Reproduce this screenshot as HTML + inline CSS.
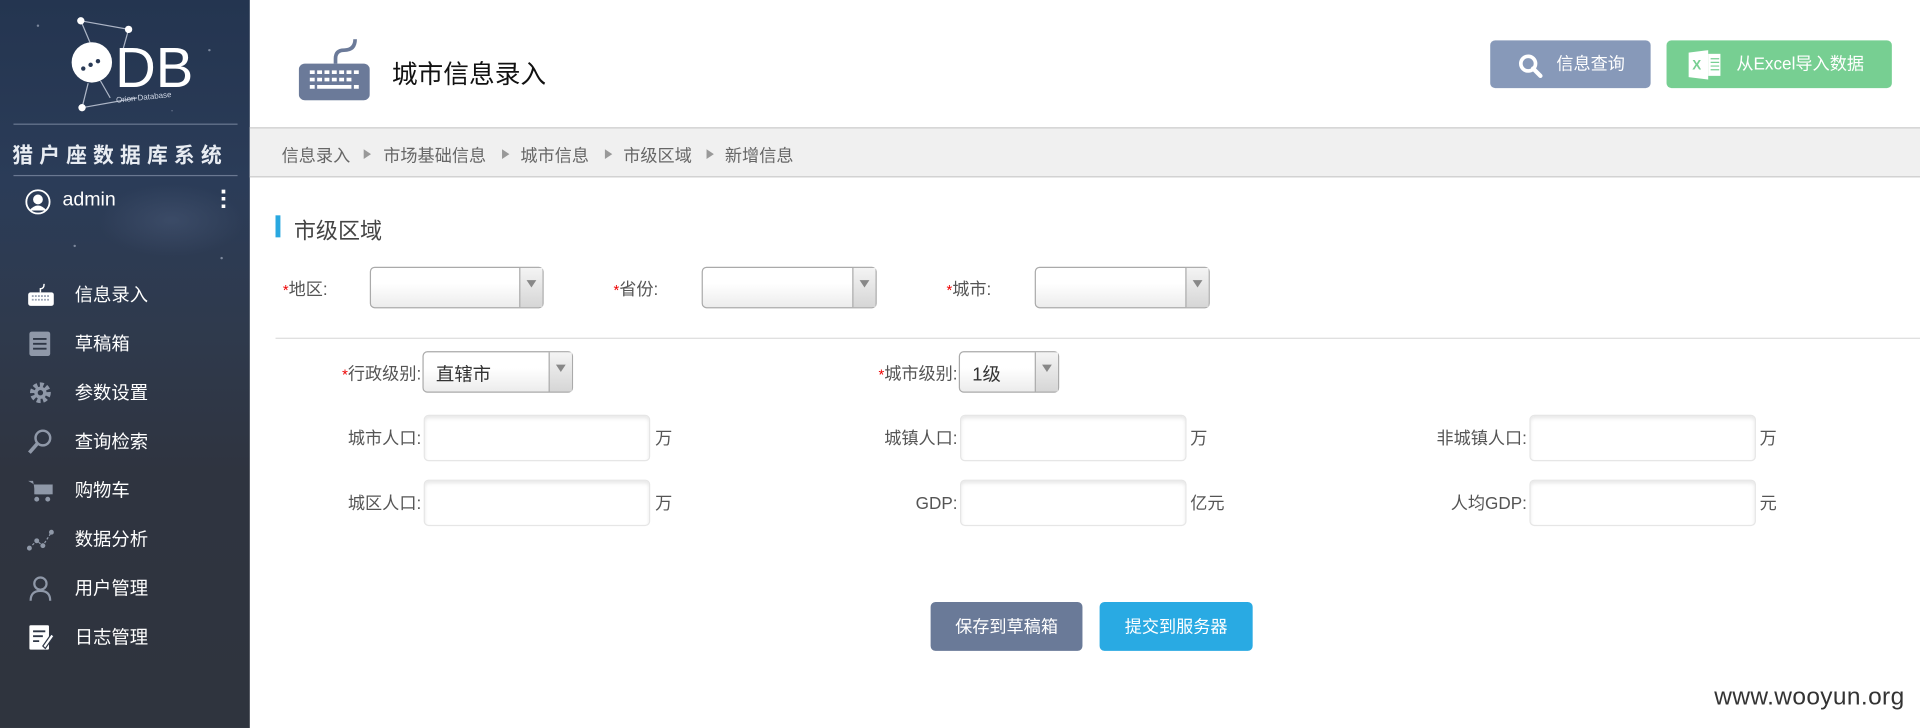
<!DOCTYPE html>
<html><head><meta charset="utf-8">
<style>
html,body{margin:0;padding:0;width:1920px;height:728px;overflow:hidden;background:#fff;}
#w{position:absolute;left:0;top:0;width:1568px;height:595px;transform:scale(1.2245,1.2235);transform-origin:0 0;font-family:"Liberation Sans","Noto Sans CJK SC",sans-serif;}
.a{position:absolute;}
#side{left:0;top:0;width:204px;height:595px;background:linear-gradient(180deg,#243550 0%,#2b3c58 25%,#2f3a4d 45%,#2f3440 65%,#2f343e 100%);overflow:hidden;}
.star{position:absolute;background:#cfd8e8;border-radius:50%;opacity:.5}
.mi{position:absolute;left:61px;color:#fff;font-size:15px;line-height:20px;}
.ic{position:absolute;left:22px;width:22px;height:22px;}
.lbl{position:absolute;font-size:14px;color:#555;line-height:18px;white-space:nowrap}
.lbl b{color:#e00;font-weight:normal;font-size:12px;}
.sel{position:absolute;height:34px;border:1px solid #aaa;border-radius:4px;background:linear-gradient(#fff 40%,#ececec);box-sizing:border-box;font-size:15px;color:#333;}
.sel i{position:absolute;right:0;top:0;bottom:0;width:18px;border-left:1px solid #aaa;background:linear-gradient(#f4f4f4,#d6d6d6);}
.sel i:after{content:"";position:absolute;left:5px;top:10px;border:4px solid transparent;border-top:6px solid #888;}
.sel span{position:absolute;left:10px;top:7px;}
.inp{position:absolute;height:38px;border:1px solid #e6e6e6;border-radius:4px;box-shadow:inset 0 2px 3px #e8e8e8;box-sizing:border-box;background:#fff;}
.unit{position:absolute;font-size:14px;color:#555;}
.btn{position:absolute;border-radius:4px;color:#fff;font-size:14px;text-align:center;}
.bc{position:absolute;top:117px;font-size:14px;color:#666;}
.tri{position:absolute;top:122px;border:4px solid transparent;border-left:6px solid #999;}
</style></head><body><div id="w">
<div id="side" class="a">
  <div class="star" style="left:30px;top:20px;width:2px;height:2px"></div>
  <div class="star" style="left:170px;top:40px;width:2px;height:2px"></div>
  <div class="star" style="left:140px;top:90px;width:1px;height:1px"></div>
  <div class="star" style="left:60px;top:200px;width:2px;height:2px"></div>
  <div class="star" style="left:180px;top:210px;width:2px;height:2px"></div>
  <div style="position:absolute;left:80px;top:150px;width:120px;height:60px;background:radial-gradient(#4a5a78,transparent 70%);opacity:.5"></div>
  <svg class="a" style="left:0;top:0" width="204" height="100" viewBox="0 0 204 100">
    <g stroke="#cfd6e4" stroke-width="1" fill="none" opacity=".8"><path d="M66 17 L105 24 M66 17 L77 43 M105 24 L100 42 M72 68 L67 88 M67 88 L112 80 M82 66 L90 80"/></g>
    <circle cx="66" cy="17" r="3" fill="#fff"/><circle cx="105" cy="24" r="3" fill="#fff"/><circle cx="67" cy="88" r="3" fill="#fff"/>
    <circle cx="75" cy="51" r="16.5" fill="#fff"/>
    <circle cx="68" cy="56" r="1.8" fill="#2a3a56"/><circle cx="74" cy="53" r="1.8" fill="#2a3a56"/><circle cx="80" cy="50" r="1.8" fill="#2a3a56"/>
    <text x="94" y="71" font-family="Liberation Sans" font-size="46" fill="#fff">DB</text>
    <text x="95" y="84" font-family="Liberation Sans" font-size="6.5" fill="#cfd6e4" transform="rotate(-6 95 84)">Orion Database</text>
  </svg>
  <div class="a" style="left:11px;top:101px;width:183px;border-top:1px solid #6a7891"></div>
  <div class="a" style="left:10px;top:113px;font-size:17px;font-weight:bold;color:#e8ecf2;letter-spacing:5px;">猎户座数据库系统</div>
  <div class="a" style="left:11px;top:143px;width:183px;border-top:1px solid #6a7891"></div>
  <svg class="a" style="left:20px;top:154px" width="22" height="22" viewBox="0 0 22 22"><circle cx="11" cy="11" r="9.5" fill="none" stroke="#fff" stroke-width="1.5"/><circle cx="11" cy="9" r="4" fill="#fff"/><path d="M4 18 Q11 10 18 18 Z" fill="#fff"/></svg>
  <div class="a" style="left:51px;top:155px;color:#fff;font-size:16px">admin</div>
  <div class="a" style="left:181px;top:155px;width:3px;height:16px;background:repeating-linear-gradient(#fff 0 3px,transparent 3px 6px)"></div>

  <svg class="ic" style="top:230px" viewBox="0 0 22 22"><path d="M14 2 Q14 6 11 6 L11 9" stroke="#fff" fill="none" stroke-width="1.2"/><rect x="1" y="9" width="21" height="11" rx="2" fill="#fff"/><path d="M4 12h15M4 15h15" stroke="#9aa3b3" stroke-width="1.5" stroke-dasharray="1.5 1"/></svg>
  <div class="mi" style="top:232px">信息录入</div>
  <svg class="ic" style="top:270px" viewBox="0 0 22 22"><rect x="2" y="1" width="17" height="20" rx="2" fill="#8f98a8"/><path d="M5 7h11M5 11h11M5 15h11" stroke="#2f3746" stroke-width="1.5"/></svg>
  <div class="mi" style="top:272px">草稿箱</div>
  <svg class="ic" style="top:310px" viewBox="0 0 22 22"><circle cx="11" cy="11" r="6.5" fill="none" stroke="#8f98a8" stroke-width="4" stroke-dasharray="3 2"/><circle cx="11" cy="11" r="5" fill="#8f98a8"/><circle cx="11" cy="11" r="2.2" fill="#2f3746"/></svg>
  <div class="mi" style="top:312px">参数设置</div>
  <svg class="ic" style="top:350px" viewBox="0 0 22 22"><circle cx="13" cy="8" r="6" fill="none" stroke="#8f98a8" stroke-width="2"/><path d="M9 12 L2 20" stroke="#8f98a8" stroke-width="3"/></svg>
  <div class="mi" style="top:352px">查询检索</div>
  <svg class="ic" style="top:390px" viewBox="0 0 22 22"><path d="M1 3h4l2 11h12l2-8H6" fill="#8f98a8"/><rect x="6" y="6" width="15" height="8" fill="#8f98a8"/><circle cx="8" cy="18" r="2" fill="#8f98a8"/><circle cx="17" cy="18" r="2" fill="#8f98a8"/></svg>
  <div class="mi" style="top:392px">购物车</div>
  <svg class="ic" style="top:430px" viewBox="0 0 22 22"><path d="M2 18 L8 12 L13 16 L20 5" stroke="#8f98a8" fill="none" stroke-width="1" stroke-dasharray="2 1.5"/><circle cx="2" cy="18" r="2" fill="#8f98a8"/><circle cx="8" cy="12" r="2" fill="#8f98a8"/><circle cx="13" cy="16" r="2" fill="#8f98a8"/><circle cx="20" cy="5" r="2" fill="#8f98a8"/></svg>
  <div class="mi" style="top:432px">数据分析</div>
  <svg class="ic" style="top:470px" viewBox="0 0 22 22"><circle cx="11" cy="7" r="5" fill="none" stroke="#8f98a8" stroke-width="1.8"/><path d="M3 21 Q3 13 11 13 Q19 13 19 21" fill="none" stroke="#8f98a8" stroke-width="1.8"/></svg>
  <div class="mi" style="top:472px">用户管理</div>
  <svg class="ic" style="top:510px" viewBox="0 0 22 22"><rect x="2" y="1" width="16" height="20" rx="1" fill="#fff"/><path d="M5 6h10M5 10h8M5 14h5" stroke="#2f3746" stroke-width="1.5"/><path d="M13 18 L20 8 L22 10 L15 20 Z" fill="#fff" stroke="#2f3746"/></svg>
  <div class="mi" style="top:512px">日志管理</div>
</div>

<svg class="a" style="left:244px;top:32px" width="58" height="50" viewBox="0 0 58 50"><path d="M46 0 Q46 9 37 9 Q30 9 30 16 L30 20" stroke="#6b7a99" fill="none" stroke-width="3"/><rect x="0" y="20" width="58" height="30" rx="5" fill="#6b7a99"/><path d="M9 27h40M9 33h35" stroke="#fff" stroke-width="3" stroke-dasharray="4 2"/><path d="M9 39h4M15 39h28M45 39h4" stroke="#fff" stroke-width="3"/></svg>
<div class="a" style="left:320px;top:45px;font-size:21px;color:#111;">城市信息录入</div>

<div class="btn" style="left:1217px;top:33px;width:131px;height:39px;background:#8799b9;line-height:39px;">
  <svg class="a" style="left:22px;top:10px" width="22" height="22" viewBox="0 0 22 22"><circle cx="9" cy="9" r="6" fill="none" stroke="#fff" stroke-width="3"/><path d="M13 13 L19 19" stroke="#fff" stroke-width="3.5" stroke-linecap="round"/></svg>
  <span style="position:absolute;left:54px;">信息查询</span></div>
<div class="btn" style="left:1361px;top:33px;width:184px;height:39px;background:#77cf92;line-height:39px;">
  <svg class="a" style="left:18px;top:8px" width="30" height="24" viewBox="0 0 30 24"><path d="M0 2 L16 0 L16 24 L0 22 Z" fill="#fff"/><rect x="16" y="3" width="10" height="18" fill="#fff"/><path d="M18 7h7M18 10h7M18 13h7M18 16h7" stroke="#77cf92" stroke-width="1"/><text x="3" y="16" font-size="11" font-weight="bold" fill="#77cf92" font-family="Liberation Sans">X</text></svg>
  <span style="position:absolute;left:57px;">从Excel导入数据</span></div>

<div class="a" style="left:204px;top:104px;width:1364px;height:39px;background:#f0f0f0;border-top:1px solid #ccc;border-bottom:1px solid #ccc"></div>
<div class="bc" style="left:230px">信息录入</div><div class="tri" style="left:297px"></div>
<div class="bc" style="left:313px">市场基础信息</div><div class="tri" style="left:410px"></div>
<div class="bc" style="left:425px">城市信息</div><div class="tri" style="left:494px"></div>
<div class="bc" style="left:509px">市级区域</div><div class="tri" style="left:577px"></div>
<div class="bc" style="left:592px">新增信息</div>

<div class="a" style="left:225px;top:176px;width:4px;height:18px;background:#29a8e0"></div>
<div class="a" style="left:240px;top:175px;font-size:18px;color:#444">市级区域</div>

<div class="lbl" style="left:231px;top:227px"><b>*</b>地区:</div>
<div class="sel" style="left:302px;top:218px;width:142px"><i></i></div>
<div class="lbl" style="left:501px;top:227px"><b>*</b>省份:</div>
<div class="sel" style="left:573px;top:218px;width:143px"><i></i></div>
<div class="lbl" style="left:773px;top:227px"><b>*</b>城市:</div>
<div class="sel" style="left:845px;top:218px;width:143px"><i></i></div>

<div class="a" style="left:225px;top:276px;width:1343px;border-top:1px solid #ddd"></div>

<div class="lbl" style="right:1224px;top:296px"><b>*</b>行政级别:</div>
<div class="sel" style="left:345px;top:287px;width:123px"><span>直辖市</span><i></i></div>
<div class="lbl" style="right:786px;top:296px"><b>*</b>城市级别:</div>
<div class="sel" style="left:783px;top:287px;width:82px"><span>1级</span><i></i></div>

<div class="lbl" style="right:1224px;top:349px">城市人口:</div>
<div class="inp" style="left:346px;top:339px;width:185px"></div><div class="unit" style="left:535px;top:348px">万</div>
<div class="lbl" style="right:786px;top:349px">城镇人口:</div>
<div class="inp" style="left:784px;top:339px;width:185px"></div><div class="unit" style="left:972px;top:348px">万</div>
<div class="lbl" style="right:321px;top:349px">非城镇人口:</div>
<div class="inp" style="left:1249px;top:339px;width:185px"></div><div class="unit" style="left:1437px;top:348px">万</div>

<div class="lbl" style="right:1224px;top:402px">城区人口:</div>
<div class="inp" style="left:346px;top:392px;width:185px"></div><div class="unit" style="left:535px;top:401px">万</div>
<div class="lbl" style="right:786px;top:402px">GDP:</div>
<div class="inp" style="left:784px;top:392px;width:185px"></div><div class="unit" style="left:972px;top:401px">亿元</div>
<div class="lbl" style="right:321px;top:402px">人均GDP:</div>
<div class="inp" style="left:1249px;top:392px;width:185px"></div><div class="unit" style="left:1437px;top:401px">元</div>

<div class="btn" style="left:760px;top:492px;width:124px;height:40px;line-height:40px;background:#6a7a98">保存到草稿箱</div>
<div class="btn" style="left:898px;top:492px;width:125px;height:40px;line-height:40px;background:#29aae3">提交到服务器</div>

<div class="a" style="left:1400px;top:559px;font-size:20px;color:#333;letter-spacing:0.3px">www.wooyun.org</div>
</div></body></html>
